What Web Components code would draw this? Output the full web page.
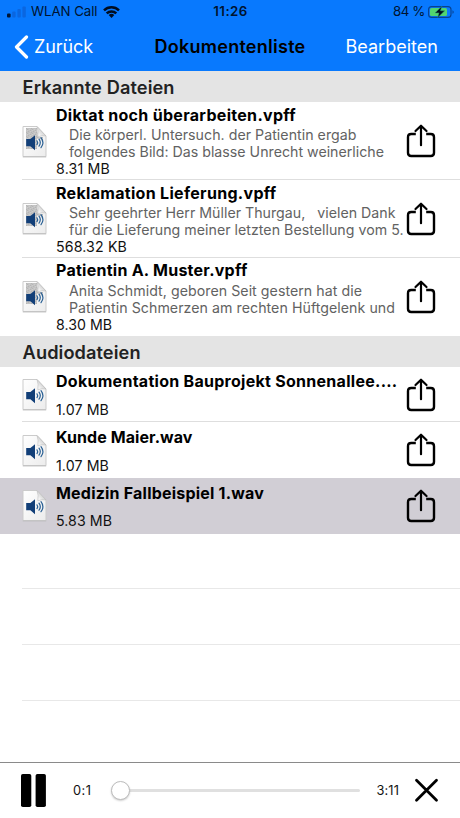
<!DOCTYPE html>
<html lang="de">
<head>
<meta charset="utf-8">
<title>Dokumentenliste</title>
<style>
html,body{margin:0;padding:0}
body{width:460px;height:818px;overflow:hidden;background:#fff;font-family:Inter,"Liberation Sans",sans-serif;color:#000}
</style>
</head>
<body>
<document-screen></document-screen>
<script>
const define = (name, html, setup) => {
  const tpl = document.createElement('template');
  tpl.innerHTML = html;
  customElements.define(name, class extends HTMLElement {
    constructor() {
      super();
      this.attachShadow({mode: 'open'}).append(tpl.content.cloneNode(true));
    }
    connectedCallback() { if (setup) setup(this, this.shadowRoot); }
  });
};

/* One line of text, tracked so that it takes the given width. */
define('tracked-text', `<style>
:host{display:block;white-space:pre}
span{display:inline-block;white-space:pre}
</style><span></span>`, (el, root) => {
  const s = root.querySelector('span');
  s.textContent = el.getAttribute('text');
  const w = parseFloat(el.getAttribute('width'));
  if (w) {
    const n = s.textContent.length;
    s.style.letterSpacing = ((w - s.getBoundingClientRect().width) / n).toFixed(3) + 'px';
  }
});

define('signal-icon', `<style>:host{display:block;width:20px;height:12px}svg{display:block}</style>
<svg width="20" height="12"><rect x="0" y="7.5" width="3.6" height="4" rx="1" fill="#001535"/><g fill="#0a66e0"><rect x="5.2" y="5.6" width="3.4" height="5.9" rx="1"/><rect x="10.4" y="3" width="3.4" height="8.5" rx="1"/><rect x="15.4" y=".5" width="3.4" height="11" rx="1"/></g></svg>`);

define('wifi-icon', `<style>:host{display:block;width:17px;height:12px}svg{display:block}</style>
<svg width="17" height="12" viewBox="0 0 17 12" fill="none" stroke="#000d20" stroke-width="2.5"><path d="M1 4.3a10.8 10.8 0 0 1 15 0"/><path d="M3.7 7.4a6.8 6.8 0 0 1 9.6 0"/><path d="M8.5 12L5.7 9.1a4.1 4.1 0 0 1 5.6 0z" fill="#000d20" stroke="none"/></svg>`);

define('battery-icon', `<style>:host{display:block;width:27px;height:12px}svg{display:block}</style>
<svg width="27" height="12" viewBox="0 0 27 12"><rect x=".6" y=".6" width="22.4" height="10.8" rx="3" fill="none" stroke="#07418f" stroke-width="1.1"/><rect x="2" y="2" width="17" height="8" rx="1.6" fill="#52d46f"/><path d="M24.5 4.2c1.6.5 1.6 3.1 0 3.6z" fill="#07418f"/><path d="M13.8.2L7 6.9h4L9.6 11.7l7.1-6.9h-4.2z" fill="#001020" stroke="#2d9b70" stroke-width=".5"/></svg>`);

define('share-icon', `<style>:host{display:block;width:30px;height:36px}svg{display:block}</style>
<svg width="30" height="36" viewBox="0 0 30 36" fill="none" stroke="#000" stroke-width="2.4" stroke-linecap="round" stroke-linejoin="round"><path d="M9.8 11H5.2Q2 11 2 14.2v15.6Q2 33 5.2 33h19.6q3.2 0 3.2-3.2V14.2q0-3.2-3.2-3.2h-4.6" stroke-linecap="butt"/><path d="M15 22.2V3M9.5 8L15 2.7 20.5 8" stroke-width="2.2"/></svg>`);

define('file-icon', `<style>
:host{display:block;width:25px;height:33px}svg{display:block}
.scan{display:none}:host([scan]) .scan{display:block}
</style>
<svg width="25" height="33" viewBox="0 0 25 33">
<defs><linearGradient id="p" x1="0" y1="0" x2="1" y2="1"><stop offset="0" stop-color="#fff"/><stop offset="1" stop-color="#ececec"/></linearGradient>
<linearGradient id="f" x1="0" y1="1" x2="1" y2="0"><stop offset=".2" stop-color="#f6f6f6"/><stop offset="1" stop-color="#a9a9a9"/></linearGradient>
<pattern id="n" width="5" height="4" patternUnits="userSpaceOnUse"><rect width="5" height="4" fill="#c3c3c3"/><path d="M0 .5h1m2 1h1M1 2.5h1m2 1h1" stroke="#b6b6b6"/><path d="M2 .5h1M0 1.5h1m2 1h1" stroke="#cdcdcd"/></pattern></defs>
<path d="M1 1.5h14L24 11v20.5H1z" fill="url(#p)" stroke="#cbcbcb" stroke-width="1"/>
<path d="M.8 32h23.4" stroke="#bbb" stroke-width=".8"/>
<path class="scan" d="M4 3h11l1 9h5v5q-3-5-6-3v10H4z" fill="url(#n)"/>
<path d="M15 1.5Q16.8 6 15.8 11.8 20 10 24 11z" fill="url(#f)" stroke="#bcbcbc" stroke-width=".6"/>
<path d="M4.2 13.6h4.2L13 9.7v15l-4.6-4H4.2z" fill="#123f78" transform="translate(0 .5)"/>
<g fill="none" stroke="#2a6094" stroke-width="1.2" stroke-linecap="round"><path d="M15 15.8q1.4 1.9 0 3.8"/><path d="M17 14.2q2.6 3.5 0 7"/><path d="M19 12.7q3.8 5 0 10"/></g></svg>`);

define('status-bar', `<style>
:host{display:flex;align-items:center;height:23px;padding:0 9px 0 7px;font-size:13.3px;line-height:23px;color:#00142f}
wifi-icon{margin-left:5px}.l,.r{display:flex;align-items:center;flex:1}.r{justify-content:flex-end;gap:3px}
signal-icon{margin-right:4px}.time{font-weight:600;margin-left:3px}battery-icon{margin-right:-4px}
</style><div class="l"><signal-icon></signal-icon><tracked-text text="WLAN Call" width="66.5"></tracked-text><wifi-icon></wifi-icon></div>
<tracked-text class="time" text="11:26" width="34.5"></tracked-text>
<div class="r"><tracked-text text="84 %" width="32"></tracked-text><battery-icon></battery-icon></div>`);

define('nav-bar', `<style>
:host{display:grid;grid-template-columns:1fr auto 1fr;align-items:center;height:48px;padding:0 22px 0 14px;font-size:18px;line-height:48px}
.back{display:flex;align-items:center;gap:5px;color:#fff}.title{font-weight:600;margin-left:8px}.edit{justify-self:end;color:#fff}svg{display:block}
</style><div class="back"><svg width="15" height="24" viewBox="0 0 15 24"><path d="M12.5 2L2.5 12l10 10" fill="none" stroke="#fff" stroke-width="3.2" stroke-linecap="round" stroke-linejoin="round"/></svg><tracked-text text="Zurück" width="59"></tracked-text></div>
<tracked-text class="title" text="Dokumentenliste" width="151"></tracked-text>
<tracked-text class="edit" text="Bearbeiten" width="92.5"></tracked-text>`);

define('section-header', `<style>
:host{display:block;box-sizing:border-box;height:31.2px;padding-left:22.6px;background:#e4e4e4;font-size:18.2px;font-weight:600;line-height:33.5px;color:#222}
</style><slot></slot>`);

define('file-row', `<style>
:host{display:flex;box-sizing:border-box;height:77.8px;align-items:center;padding:0 24px 0 22px;position:relative}
:host([audio]){height:55.6px}
:host([selected]){background:#d1ced5}
:host([line])::after{content:"";position:absolute;left:22px;right:0;bottom:0;height:1px;background:#dedede}
.body{align-self:stretch;flex:1;min-width:0;margin-left:9px;padding-top:2.7px}
:host([audio]) .body{padding-top:4.6px}
.name{font-size:16px;font-weight:650;line-height:20px}
.preview{margin:1.4px 0 0 13px;font-size:14.2px;line-height:17px;color:#626262}
.size{font-size:14.2px;line-height:17px;color:#111}
:host([audio]) .size{margin-top:9.9px}
file-icon{flex:none}share-icon{flex:none}
</style><file-icon></file-icon><div class="body"><div class="name"></div><div class="preview"></div><div class="size"></div></div><share-icon></share-icon>`, (el, root) => {
  const put = (sel, text, width) => {
    const t = document.createElement('tracked-text');
    t.setAttribute('text', text); t.setAttribute('width', width);
    root.querySelector(sel).append(t);
  };
  const d = el.data;
  put('.name', ...d.name);
  put('.size', ...d.size);
  if (d.preview) {
    d.preview.forEach(p => put('.preview', ...p));
    root.querySelector('file-icon').setAttribute('scan', '');
  } else root.querySelector('.preview').remove();
});

define('file-list', `<style>:host{display:block}</style>`, (el, root) => {
  el.files.forEach((f, i) => {
    const row = document.createElement('file-row');
    row.data = f;
    if (!f.preview) row.setAttribute('audio', '');
    if (f.selected) row.setAttribute('selected', '');
    if (i < el.files.length - 1 && !el.files[i + 1].selected) row.setAttribute('line', '');
    root.append(row);
  });
});

define('empty-row', `<style>:host{display:block;box-sizing:border-box;height:55.7px;margin-left:22px;border-bottom:1px solid #e8e8e8}</style>`);

define('audio-player', `<style>
:host{display:flex;align-items:center;box-sizing:border-box;height:56px;border-top:1.5px solid #8a8a8a;padding:0 21px;background:#fff;font-size:12.8px;color:#111}
svg{display:block;flex:none}.cur{margin-left:26px}.track{flex:1;height:3px;border-radius:2px;background:#e0e0e0;margin:0 17px 0 19px;display:flex;align-items:center}
.knob{width:17px;height:17px;flex:none;border-radius:50%;background:#fff;border:1px solid #bdbdbd;box-shadow:0 1px 2px #0003}
.close{margin-left:15px}
</style><svg width="26" height="34"><rect x="0" y="0" width="10.3" height="33" rx="1.8"/><rect x="14.6" y="0" width="10.3" height="33" rx="1.8"/></svg>
<tracked-text class="cur" text="0:1" width="18.5"></tracked-text><div class="track"><div class="knob"></div></div>
<tracked-text text="3:11" width="22.5"></tracked-text>
<svg class="close" width="25" height="25" viewBox="0 0 25 25"><path d="M2.5 2.2l20 20m0-20l-20 20" stroke="#000" stroke-width="2.8" stroke-linecap="round"/></svg>`);

customElements.define('document-screen', class extends HTMLElement {
  constructor() {
    super();
    this.attachShadow({mode: 'open'}).innerHTML = `<style>
:host{display:flex;flex-direction:column;width:460px;height:818px}
header{background:#0879fe;flex:none}
main{flex:1;min-height:0;overflow:hidden}
audio-player{flex:none}
</style><header><status-bar></status-bar><nav-bar></nav-bar></header>
<main></main><audio-player></audio-player>`;
    const main = this.shadowRoot.querySelector('main');
    const section = (title, width, files) => {
      const h = document.createElement('section-header');
      const t = document.createElement('tracked-text');
      t.setAttribute('text', title); t.setAttribute('width', width);
      h.append(t);
      const list = document.createElement('file-list');
      list.files = files;
      main.append(h, list);
    };
    section('Erkannte Dateien', 152, [
      {name: ['Diktat noch überarbeiten.vpff', 240], size: ['8.31 MB', 54],
       preview: [['Die körperl. Untersuch. der Patientin ergab', 287.5], ['folgendes Bild: Das blasse Unrecht weinerliche', 315]]},
      {name: ['Reklamation Lieferung.vpff', 220.5], size: ['568.32 KB', 71],
       preview: [['Sehr geehrter Herr Müller Thurgau,\u00a0\u00a0 vielen Dank', 326.5], ['für die Lieferung meiner letzten Bestellung vom 5.', 334.5]]},
      {name: ['Patientin A. Muster.vpff', 191.5], size: ['8.30 MB', 56],
       preview: [['Anita Schmidt, geboren Seit gestern hat die', 293], ['Patientin Schmerzen am rechten Hüftgelenk und', 326]]}
    ]);
    section('Audiodateien', 118, [
      {name: ['Dokumentation Bauprojekt Sonnenallee....', 341.5], size: ['1.07 MB', 53]},
      {name: ['Kunde Maier.wav', 136.5], size: ['1.07 MB', 53]},
      {name: ['Medizin Fallbeispiel 1.wav', 208], size: ['5.83 MB', 56], selected: true}
    ]);
    for (let i = 0; i < 3; i++) main.append(document.createElement('empty-row'));
  }
});
</script>
</body>
</html>
